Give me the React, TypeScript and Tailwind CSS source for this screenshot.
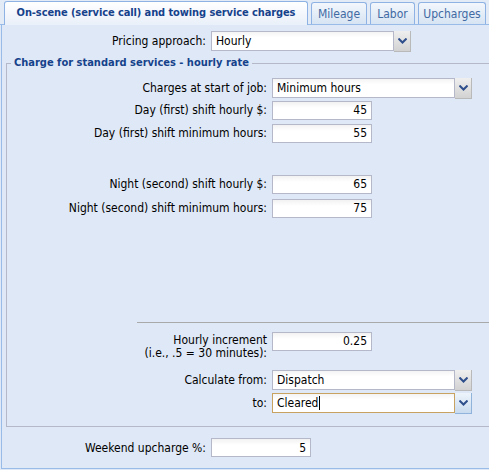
import React from 'react';

const font = { fontFamily: "'DejaVu Sans Condensed', 'DejaVu Sans', sans-serif" };

function Chevron() {
  return (
    <svg width="9" height="6" viewBox="0 0 9 6">
      <path d="M0.5 0.5 L4.5 4.5 L8.5 0.5" fill="none" stroke="#2f4f8c" strokeWidth="2" />
    </svg>
  );
}

function Combo({ value, width = 'w-[200px]', focused = false }: { value: string; width?: string; focused?: boolean }) {
  return (
    <div className={`flex h-[20px] ${width}`}>
      <div
        className={`flex-1 flex items-center pl-[4px] text-[12px] text-black bg-gradient-to-b from-[#f4f4f4] to-white to-[30%] border ${
          focused ? 'border-[#c7a261]' : 'border-[#b5b8c8]'
        }`}
      >
        {value}
        {focused && <span className="ml-px inline-block w-px h-[14px] bg-black" />}
      </div>
      <div
        className={`w-[17px] h-[21px] flex items-center justify-center border-b border-r ${
          focused
            ? 'bg-gradient-to-b from-[#eef4fb] to-[#c9dbef] border-[#90b3dc]'
            : 'bg-gradient-to-b from-[#efefef] to-[#d2d2d2] border-[#b9b9b9]'
        }`}
      >
        <Chevron />
      </div>
    </div>
  );
}

function Num({ value, width = 'w-[100px]' }: { value: string; width?: string }) {
  return (
    <div
      className={`${width} h-[19px] flex items-center justify-end pr-[4px] text-[12px] text-black border border-[#b5b8c8] bg-gradient-to-b from-[#f2f2f2] to-white to-[35%]`}
    >
      {value}
    </div>
  );
}

function Row({ label, children, className = '' }: { label: React.ReactNode; children: React.ReactNode; className?: string }) {
  return (
    <div className={`flex items-center ${className}`}>
      <div className="w-[265px] pr-[5px] text-right text-[12px] text-black whitespace-nowrap">{label}</div>
      {children}
    </div>
  );
}

export default function App() {
  const tabs = [
    { t: 'Mileage', w: 'w-[56px]' },
    { t: 'Labor', w: 'w-[45px]' },
    { t: 'Upcharges', w: 'w-[68px]' },
  ];
  return (
    <div className="w-[489px] h-[470px] bg-[#dfe8f6] overflow-hidden" style={font}>
      <div className="h-[25px] flex items-end gap-[3px] pl-[4px] border-b border-[#99bbe8] bg-[#e3ebf7]">
        <div className="w-[304px] h-[24px] flex items-center justify-center whitespace-nowrap text-[11px] tracking-[-0.1px] font-bold text-[#15428b] bg-gradient-to-b from-white to-[#e9f0f9] border border-b-0 border-[#8db2e3] rounded-t-[3px] -mb-px">
          On-scene (service call) and towing service charges
        </div>
        {tabs.map(({ t, w }) => (
          <div
            key={t}
            className={`${w} h-[22px] flex items-center justify-center whitespace-nowrap text-[12px] text-[#416aa3] bg-gradient-to-b from-[#f3f7fc] to-[#d7e4f3] border border-b-0 border-[#8db2e3] rounded-t-[3px]`}
          >
            {t}
          </div>
        ))}
      </div>

      <div className="h-[444px] ml-[1px] border-l border-b border-[#99bbe8] pt-[6px]">
        <div className="flex items-center">
          <div className="w-[209px] pr-[5px] text-right text-[12px] text-black">Pricing approach:</div>
          <Combo value="Hourly" />
        </div>

        <fieldset className="ml-[4px] mt-[4px] w-[500px] h-[372px] border border-[#b5b8c8] p-0">
          <legend className="ml-[4px] px-[3px] text-[11px] font-bold text-[#15428b]">
            Charge for standard services - hourly rate
          </legend>
          <Row label="Charges at start of job:" className="mt-[6px]">
            <Combo value="Minimum hours" />
          </Row>
          <Row label="Day (first) shift hourly $:" className="mt-[3px]">
            <Num value="45" />
          </Row>
          <Row label="Day (first) shift minimum hours:" className="mt-[4px]">
            <Num value="55" />
          </Row>
          <Row label="Night (second) shift hourly $:" className="mt-[32px]">
            <Num value="65" />
          </Row>
          <Row label="Night (second) shift minimum hours:" className="mt-[5px]">
            <Num value="75" />
          </Row>

          <div className="ml-[130px] mt-[104px] border-t border-[#a9a9a9]" />

          <div className="flex items-start mt-[9px]">
            <div className="w-[265px] pr-[5px] text-right text-[12px] leading-[13px] text-black pt-[2px]">
              Hourly increment
              <br />
              (i.e., .5 = 30 minutes):
            </div>
            <Num value="0.25" />
          </div>
          <Row label="Calculate from:" className="mt-[10px]">
            <Combo value="Dispatch" />
          </Row>
          <Row label="to:" className="mt-[3px]">
            <Combo value="Cleared" focused />
          </Row>
        </fieldset>

        <div className="flex items-center mt-[11px]">
          <div className="w-[209px] pr-[5px] text-right text-[12px] text-black">Weekend upcharge %:</div>
          <Num value="5" />
        </div>
      </div>
    </div>
  );
}
